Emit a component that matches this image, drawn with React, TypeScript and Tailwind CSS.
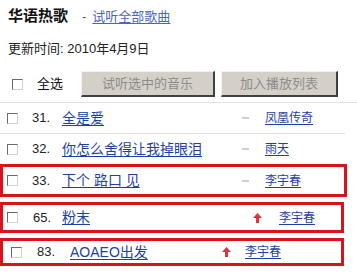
import { ReactNode } from "react";

function Check({ className = "" }: { className?: string }) {
  return (
    <span
      className={`block w-[11px] h-[11px] shrink-0 bg-white border border-t-[#6a6a6a] border-l-[#6a6a6a] border-r-[#d0d0d0] border-b-[#d0d0d0] ${className}`}
    />
  );
}

function Dash() {
  return <span className="block w-[7px] h-[2px] bg-[#cfcfcf]" />;
}

function UpArrow() {
  return (
    <svg width="9" height="10" viewBox="0 0 9 10" className="block">
      <polygon points="4.5,0 9,5 6,5 6,10 3,10 3,5 0,5" fill="#e0343c" />
    </svg>
  );
}

interface RowProps {
  num: string;
  title: string;
  artist: string;
  mark: ReactNode;
  // column edges, written out per row
  checkCls: string;
  numCls: string;
  titleCls: string;
  markCls: string;
}

function Row({ num, title, artist, mark, checkCls, numCls, titleCls, markCls }: RowProps) {
  return (
    <div className="flex items-center h-full">
      <Check className={checkCls} />
      <span className={`text-[13px] text-[#222] shrink-0 ${numCls}`}>{num}</span>
      <a className={`text-[14px] text-[#1f3fa6] underline underline-offset-2 shrink-0 ${titleCls}`}>{title}</a>
      <span className={`flex items-center shrink-0 ${markCls}`}>{mark}</span>
      <a className="text-[12px] text-[#1f3fa6] underline underline-offset-2">{artist}</a>
    </div>
  );
}

export default function App() {
  return (
    <div className="w-[357px] h-[279px] bg-white overflow-hidden font-['Liberation_Sans','Noto_Sans_CJK_SC',sans-serif] text-[#111]">
      {/* 标题 */}
      <div className="h-[32px] flex items-center pl-[8px] pt-[1px]">
        <span className="text-[15px] font-bold">华语热歌</span>
        <span className="ml-[14px] text-[13px] text-[#555]">-</span>
        <a className="ml-[6px] text-[13px] text-[#4a66c4] underline underline-offset-2">试听全部歌曲</a>
      </div>
      <div className="h-[34px] flex items-center pl-[8px] text-[13px] text-[#222]">
        更新时间: 2010年4月9日
      </div>

      {/* 操作 */}
      <div className="h-[37px] flex items-center border-b border-[#e2e2e2]">
        <Check className="ml-[12px]" />
        <span className="ml-[14px] text-[13px] text-[#111]">全选</span>
        <button className="ml-[18px] w-[134px] h-[26px] bg-[#d4d0c8] border-t border-l border-t-[#f0f0f0] border-l-[#f0f0f0] border-r-2 border-b-2 border-r-[#404040] border-b-[#404040] text-[13px] text-[#8c8c8c]">
          试听选中的音乐
        </button>
        <button className="ml-[6px] w-[117px] h-[26px] bg-[#d4d0c8] border-t border-l border-t-[#f0f0f0] border-l-[#f0f0f0] border-r-2 border-b-2 border-r-[#404040] border-b-[#404040] text-[13px] text-[#8c8c8c]">
          加入播放列表
        </button>
      </div>

      {/* 歌曲 */}
      <div className="h-[31px] border-b border-[#e2e2e2] w-[345px]">
        <Row
          num="31."
          title="全是爱"
          artist="凤凰传奇"
          mark={<Dash />}
          checkCls="ml-[7px]"
          numCls="ml-[14px] w-[30px]"
          titleCls="w-[180px]"
          markCls="w-[23px]"
        />
      </div>
      <div className="h-[30px] w-[345px]">
        <Row
          num="32."
          title="你怎么舍得让我掉眼泪"
          artist="雨天"
          mark={<Dash />}
          checkCls="ml-[7px]"
          numCls="ml-[14px] w-[30px]"
          titleCls="w-[180px]"
          markCls="w-[23px]"
        />
      </div>

      <div className="h-[33px] w-[347px] border-[3px] border-[#d8131b]">
        <Row
          num="33."
          title="下个 路口 见"
          artist="李宇春"
          mark={<Dash />}
          checkCls="ml-[4px]"
          numCls="ml-[14px] w-[30px]"
          titleCls="w-[180px]"
          markCls="w-[23px]"
        />
      </div>
      <div className="mt-[5px] h-[31px] w-[344px] border-[3px] border-[#d8131b]">
        <Row
          num="65."
          title="粉末"
          artist="李宇春"
          mark={<UpArrow />}
          checkCls="ml-[4px]"
          numCls="ml-[15px] w-[29px]"
          titleCls="w-[191px]"
          markCls="w-[26px]"
        />
      </div>
      <div className="mt-[5px] h-[28px] w-[344px] border-[3px] border-[#d8131b]">
        <Row
          num="83."
          title="AOAEO出发"
          artist="李宇春"
          mark={<UpArrow />}
          checkCls="ml-[8px]"
          numCls="ml-[15px] w-[33px]"
          titleCls="w-[152px]"
          markCls="w-[23px]"
        />
      </div>
    </div>
  );
}
